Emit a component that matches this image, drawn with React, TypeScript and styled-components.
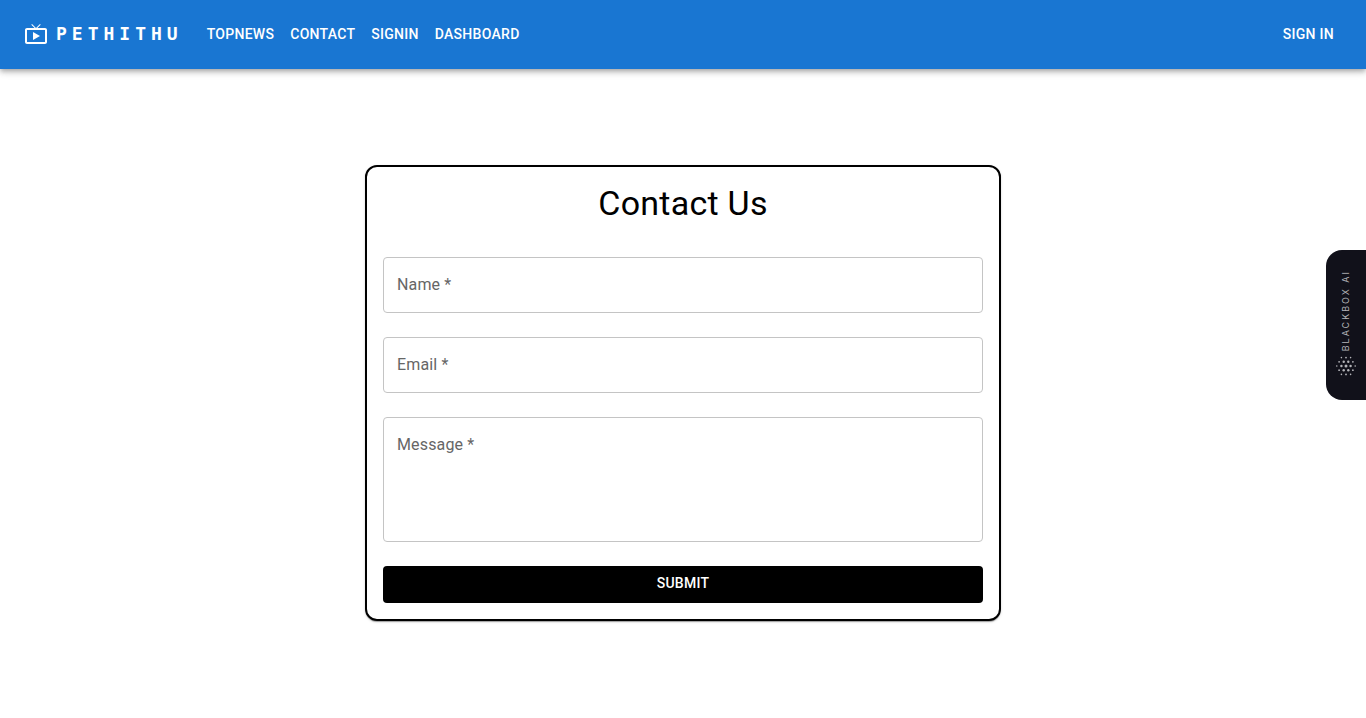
import React from "react";
import styled, { createGlobalStyle, css } from "styled-components";

const GlobalStyle = createGlobalStyle`
  *, *::before, *::after {
    box-sizing: border-box;
  }
  body {
    margin: 0;
    background: #fff;
    color: #000;
    font-family: Roboto, "Liberation Sans", sans-serif;
    font-size: 16px;
    line-height: 24px;
  }
`;

const AppBar = styled.header`
  display: flex;
  align-items: center;
  min-height: 69px;
  padding: 0 24px 2px;
  background: #1976d2;
  color: #fff;
  box-shadow: 0 2px 4px -1px rgba(0, 0, 0, 0.2), 0 4px 5px 0 rgba(0, 0, 0, 0.14),
    0 1px 10px 0 rgba(0, 0, 0, 0.12);
`;

const Brand = styled.a`
  display: flex;
  align-items: center;
  gap: 8px;
  margin-right: 16px;
  color: inherit;
  text-decoration: none;
  font-family: "DejaVu Sans Mono", monospace;
  font-size: 18px;
  font-weight: 700;
  letter-spacing: 5px;
`;

const Nav = styled.nav`
  display: flex;
  flex: 1;
`;

const buttonText = css`
  font-family: inherit;
  font-size: 14px;
  font-weight: 500;
  line-height: 24px;
  letter-spacing: 0.02em;
  text-transform: uppercase;
`;

const NavLink = styled.a`
  ${buttonText}
  padding: 6px 8px;
  border-radius: 4px;
  color: inherit;
  text-decoration: none;
  &:hover {
    background: rgba(255, 255, 255, 0.08);
  }
`;

const Main = styled.main`
  display: flex;
  justify-content: center;
  padding: 96px 24px;
`;

const Card = styled.form`
  display: flex;
  flex-direction: column;
  gap: 24px;
  width: 100%;
  max-width: 636px;
  padding: 16px;
  border: 2px solid #000;
  border-radius: 12px;
  background: #fff;
  box-shadow: 0 2px 1px -1px rgba(0, 0, 0, 0.2), 0 1px 1px 0 rgba(0, 0, 0, 0.14),
    0 1px 3px 0 rgba(0, 0, 0, 0.12);
`;

const Title = styled.h1`
  margin: 0 0 10px;
  font-size: 34px;
  font-weight: 400;
  line-height: 40px;
  letter-spacing: 0.00735em;
  text-align: center;
`;

const Field = styled.div`
  position: relative;
  display: flex;
`;

const control = css`
  width: 100%;
  padding: 16px 13px;
  border: 1px solid #c4c4c4;
  border-radius: 4px;
  background: transparent;
  color: rgba(0, 0, 0, 0.87);
  font: inherit;
  resize: none;
  &:hover {
    border-color: #212121;
  }
  &:focus {
    outline: 1px solid #1976d2;
    border-color: #1976d2;
  }
`;

const TextInput = styled.input`
  ${control}
  height: 56px;
`;

const TextArea = styled.textarea`
  ${control}
  height: 125px;
`;

const FieldLabel = styled.label`
  position: absolute;
  top: 16px;
  left: 14px;
  color: #666;
  letter-spacing: 0.00938em;
  pointer-events: none;
  ${Field}:focus-within &,
  :not(:placeholder-shown) + & {
    top: -12px;
    padding: 0 4px;
    background: #fff;
    font-size: 12px;
  }
`;

const Submit = styled.button`
  ${buttonText}
  height: 37px;
  padding: 0 16px 3px;
  border: 0;
  border-radius: 4px;
  background: #000;
  color: #fff;
  cursor: pointer;
`;

const SideTab = styled.button`
  position: fixed;
  top: 250px;
  right: 0;
  display: flex;
  flex-direction: column;
  align-items: center;
  justify-content: flex-end;
  gap: 5px;
  width: 40px;
  height: 150px;
  padding: 0 0 24px;
  border: 0;
  border-radius: 16px 0 0 16px;
  background: #11111a;
  color: #b4b4b8;
  cursor: pointer;
`;

const SideText = styled.span`
  writing-mode: vertical-rl;
  transform: rotate(180deg);
  font-family: Inter, sans-serif;
  font-size: 9px;
  line-height: 12px;
  letter-spacing: 2px;
`;

const links = ["TopNews", "Contact", "SignIn", "Dashboard"];

const dots: [number, number, number][] = [
  [5.4, 1.6, 0.8], [10, 1.6, 0.9], [14.6, 1.6, 0.8],
  [3.1, 5.8, 0.9], [7.7, 5.8, 1.2], [12.3, 5.8, 1.2], [16.9, 5.8, 0.9],
  [0.8, 10, 0.8], [5.4, 10, 1.2], [10, 10, 1.5], [14.6, 10, 1.2], [19.2, 10, 0.8],
  [3.1, 14.2, 0.9], [7.7, 14.2, 1.2], [12.3, 14.2, 1.2], [16.9, 14.2, 0.9],
  [5.4, 18.4, 0.8], [10, 18.4, 0.9], [14.6, 18.4, 0.8],
];

const LiveTvIcon = () => (
  <svg width="24" height="24" viewBox="0 0 24 24" fill="currentColor" aria-hidden="true">
    <path d="M21 6h-7.59l3.29-3.29L16 2l-4 4-4-4-.7.71L10.59 6H3c-1.1 0-2 .89-2 2v12c0 1.1.9 2 2 2h18c1.1 0 2-.9 2-2V8c0-1.11-.9-2-2-2zm0 14H3V8h18v12zM9 10v8l7-4z" />
  </svg>
);

const DotsIcon = () => (
  <svg width="20" height="20" viewBox="0 0 20 20" fill="currentColor" aria-hidden="true">
    {dots.map(([x, y, r]) => (
      <circle key={`${x}-${y}`} cx={x} cy={y} r={r} />
    ))}
  </svg>
);

export default function App() {
  return (
    <>
      <GlobalStyle />
      <AppBar>
        <Brand href="#">
          <LiveTvIcon />
          PETHITHU
        </Brand>
        <Nav>
          {links.map((label) => (
            <NavLink key={label} href={`#${label.toLowerCase()}`}>
              {label}
            </NavLink>
          ))}
        </Nav>
        <NavLink href="#signin">Sign in</NavLink>
      </AppBar>
      <Main>
        <Card onSubmit={(event: React.FormEvent) => event.preventDefault()}>
          <Title>Contact Us</Title>
          <Field>
            <TextInput id="name" name="name" placeholder=" " required />
            <FieldLabel htmlFor="name">Name *</FieldLabel>
          </Field>
          <Field>
            <TextInput id="email" name="email" type="email" placeholder=" " required />
            <FieldLabel htmlFor="email">Email *</FieldLabel>
          </Field>
          <Field>
            <TextArea id="message" name="message" placeholder=" " required />
            <FieldLabel htmlFor="message">Message *</FieldLabel>
          </Field>
          <Submit type="submit">Submit</Submit>
        </Card>
      </Main>
      <SideTab type="button">
        <SideText>BLACKBOX AI</SideText>
        <DotsIcon />
      </SideTab>
    </>
  );
}
